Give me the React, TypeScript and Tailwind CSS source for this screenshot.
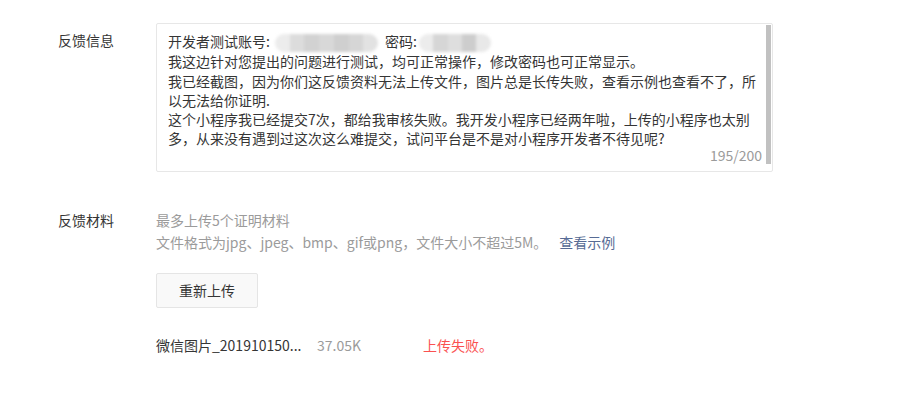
const LINES = [
  '我这边针对您提出的问题进行测试，均可正常操作，修改密码也可正常显示。',
  '我已经截图，因为你们这反馈资料无法上传文件，图片总是长传失败，查看示例也查看不了，所',
  '以无法给你证明.',
  '这个小程序我已经提交7次，都给我审核失败。我开发小程序已经两年啦，上传的小程序也太别',
  '多，从来没有遇到过这次这么难提交，试问平台是不是对小程序开发者不待见呢?',
];

function Mosaic({ width, shades }: { width: number; shades: string[] }) {
  return (
    <span
      className="inline-flex h-[18px] align-middle overflow-hidden rounded-full blur-[1.5px]"
      style={{ width }}
    >
      {shades.map((c, i) => (
        <span key={i} className="h-full flex-1" style={{ background: c }} />
      ))}
    </span>
  );
}

export default function App() {
  return (
    <div
      className="min-h-[411px] w-[912px] bg-white pl-[58px] pt-[23px] text-[14px] text-[#353535]"
      style={{ fontFamily: '"Noto Sans CJK SC", "Noto Sans", sans-serif' }}
    >
      <div className="flex">
        <div className="w-[98px] pt-[8px] leading-[19px]">反馈信息</div>
        <div className="relative h-[149px] w-[617px] rounded-[2px] border border-[#e7e7e7] pl-[11px] pt-[8px] leading-[19.3px]">
          <div className="flex items-center whitespace-nowrap">
            <span>开发者测试账号:</span>
            <span className="ml-[5px]">
              <Mosaic width={103} shades={['#ececec', '#dcdcdc', '#d2d2d2', '#d8d8d8', '#cfcfcf', '#d6d6d6', '#e2e2e2']} />
            </span>
            <span className="ml-[7px]">密码:</span>
            <span className="ml-[2px]">
              <Mosaic width={72} shades={['#ececec', '#d6d6d6', '#dedede', '#cdcdcd', '#e8e8e8']} />
            </span>
          </div>
          {LINES.map((l) => (
            <div key={l} className="whitespace-nowrap">{l}</div>
          ))}
          <div className="absolute bottom-[6px] right-[10px] leading-[19px] text-[#9b9b9b]">195/200</div>
          <div className="absolute right-[1px] top-[1px] h-[139px] w-[5px] bg-[#c1c1c1]" />
        </div>
      </div>

      <div className="mt-[37px] flex">
        <div className="w-[98px] leading-[22px]">反馈材料</div>
        <div>
          <div className="leading-[22px] text-[#9b9b9b]">最多上传5个证明材料</div>
          <div className="leading-[22px] text-[#9b9b9b]">
            文件格式为jpg、jpeg、bmp、gif或png，文件大小不超过5M。
            <span className="ml-[12px] text-[#576b95]">查看示例</span>
          </div>
          <button
            type="button"
            className="mt-[20px] h-[35px] w-[102px] rounded-[2px] border border-[#e5e5e5] bg-[#f9f9f9] text-[14px] text-[#353535]"
          >
            重新上传
          </button>
          <div className="mt-[26px] flex leading-[22px]">
            <span className="w-[161px] whitespace-nowrap">微信图片_201910150...</span>
            <span className="w-[106px] text-[#9b9b9b]">37.05K</span>
            <span className="text-[#fa5151]">上传失败。</span>
          </div>
        </div>
      </div>
    </div>
  );
}
